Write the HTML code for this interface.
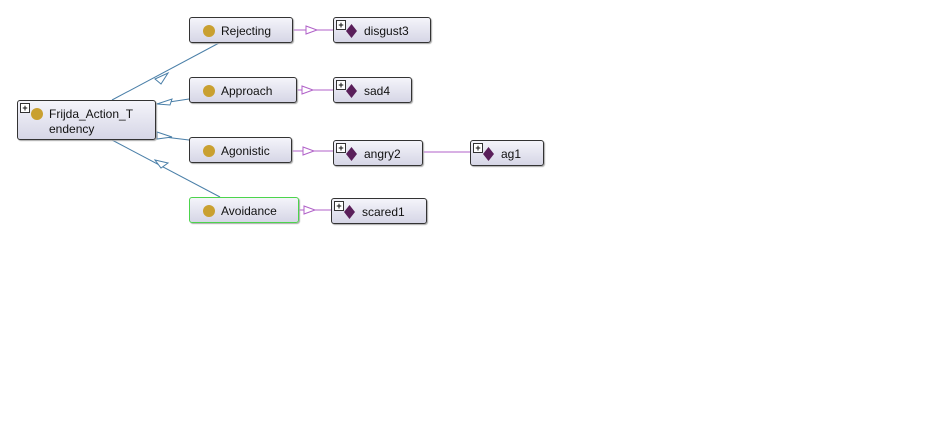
<!DOCTYPE html>
<html><head><style>
body{margin:0;width:939px;height:438px;background:#fff;position:relative;overflow:hidden;font-family:"Liberation Sans",sans-serif;font-size:12px;color:#111}
.n{position:absolute;box-sizing:border-box;border:1px solid #333;border-radius:3px;background:linear-gradient(#f4f4fa,#d6d6e6);box-shadow:1px 1px 1px #aaa}
.c{position:absolute;left:13px;top:7px;width:12px;height:12px;border-radius:50%;background:#c9a030}
.t{position:absolute;left:31px;top:6px;white-space:nowrap}
.p{position:absolute;left:2px;top:2px;width:8px;height:8px;border:1px solid #333;background:#fff;font-size:9px;line-height:8px;text-align:center;font-weight:bold}
.d{position:absolute;left:12px;top:6px;width:11px;height:14px}
</style></head><body>
<svg width="939" height="438" style="position:absolute;left:0;top:0">
<g stroke="#4a7fa8" fill="#fff" stroke-width="1">
<line x1="112" y1="100" x2="219" y2="43"/><polygon points="155,79 168,73 161,84"/>
<line x1="156" y1="104" x2="189" y2="99"/><polygon points="157,104 172,99 170,105"/>
<line x1="156" y1="136" x2="189" y2="140"/><polygon points="157,132 172,137 157,139"/>
<line x1="112" y1="140" x2="220" y2="197"/><polygon points="155,160 168,163 161,168"/>
</g>
<g stroke="#b060c8" fill="#fff" stroke-width="1">
<line x1="293" y1="30" x2="333" y2="30"/><polygon points="306,26 317,30 306,34"/>
<line x1="297" y1="90" x2="333" y2="90"/><polygon points="302,86 313,90 302,94"/>
<line x1="292" y1="151" x2="333" y2="151"/><polygon points="303,147 314,151 303,155"/>
<line x1="423" y1="152" x2="470" y2="152"/>
<line x1="299" y1="210" x2="331" y2="210"/><polygon points="304,206 315,210 304,214"/>
</g>
</svg>
<div class="n" style="left:17px;top:100px;width:139px;height:40px"><div class="p">+</div><div class="c" style="top:7px"></div><div class="t" style="top:6px;line-height:15px">Frijda_Action_T<br>endency</div></div>
<div class="n" style="left:189px;top:17px;width:104px;height:26px"><div class="c"></div><div class="t">Rejecting</div></div>
<div class="n" style="left:189px;top:77px;width:108px;height:26px"><div class="c"></div><div class="t">Approach</div></div>
<div class="n" style="left:189px;top:137px;width:103px;height:26px"><div class="c"></div><div class="t">Agonistic</div></div>
<div class="n" style="left:189px;top:197px;width:110px;height:26px;border-color:#4cd44c"><div class="c"></div><div class="t">Avoidance</div></div>
<div class="n" style="left:333px;top:17px;width:98px;height:26px"><div class="p">+</div><svg class="d" viewBox="0 0 11 14"><polygon points="5.5,0 11,7 5.5,14 0,7" fill="#5a1f5a"/></svg><div class="t" style="left:30px">disgust3</div></div>
<div class="n" style="left:333px;top:77px;width:79px;height:26px"><div class="p">+</div><svg class="d" viewBox="0 0 11 14"><polygon points="5.5,0 11,7 5.5,14 0,7" fill="#5a1f5a"/></svg><div class="t" style="left:30px">sad4</div></div>
<div class="n" style="left:333px;top:140px;width:90px;height:26px"><div class="p">+</div><svg class="d" viewBox="0 0 11 14"><polygon points="5.5,0 11,7 5.5,14 0,7" fill="#5a1f5a"/></svg><div class="t" style="left:30px">angry2</div></div>
<div class="n" style="left:470px;top:140px;width:74px;height:26px"><div class="p">+</div><svg class="d" viewBox="0 0 11 14"><polygon points="5.5,0 11,7 5.5,14 0,7" fill="#5a1f5a"/></svg><div class="t" style="left:30px">ag1</div></div>
<div class="n" style="left:331px;top:198px;width:96px;height:26px"><div class="p">+</div><svg class="d" viewBox="0 0 11 14"><polygon points="5.5,0 11,7 5.5,14 0,7" fill="#5a1f5a"/></svg><div class="t" style="left:30px">scared1</div></div>
</body></html>
